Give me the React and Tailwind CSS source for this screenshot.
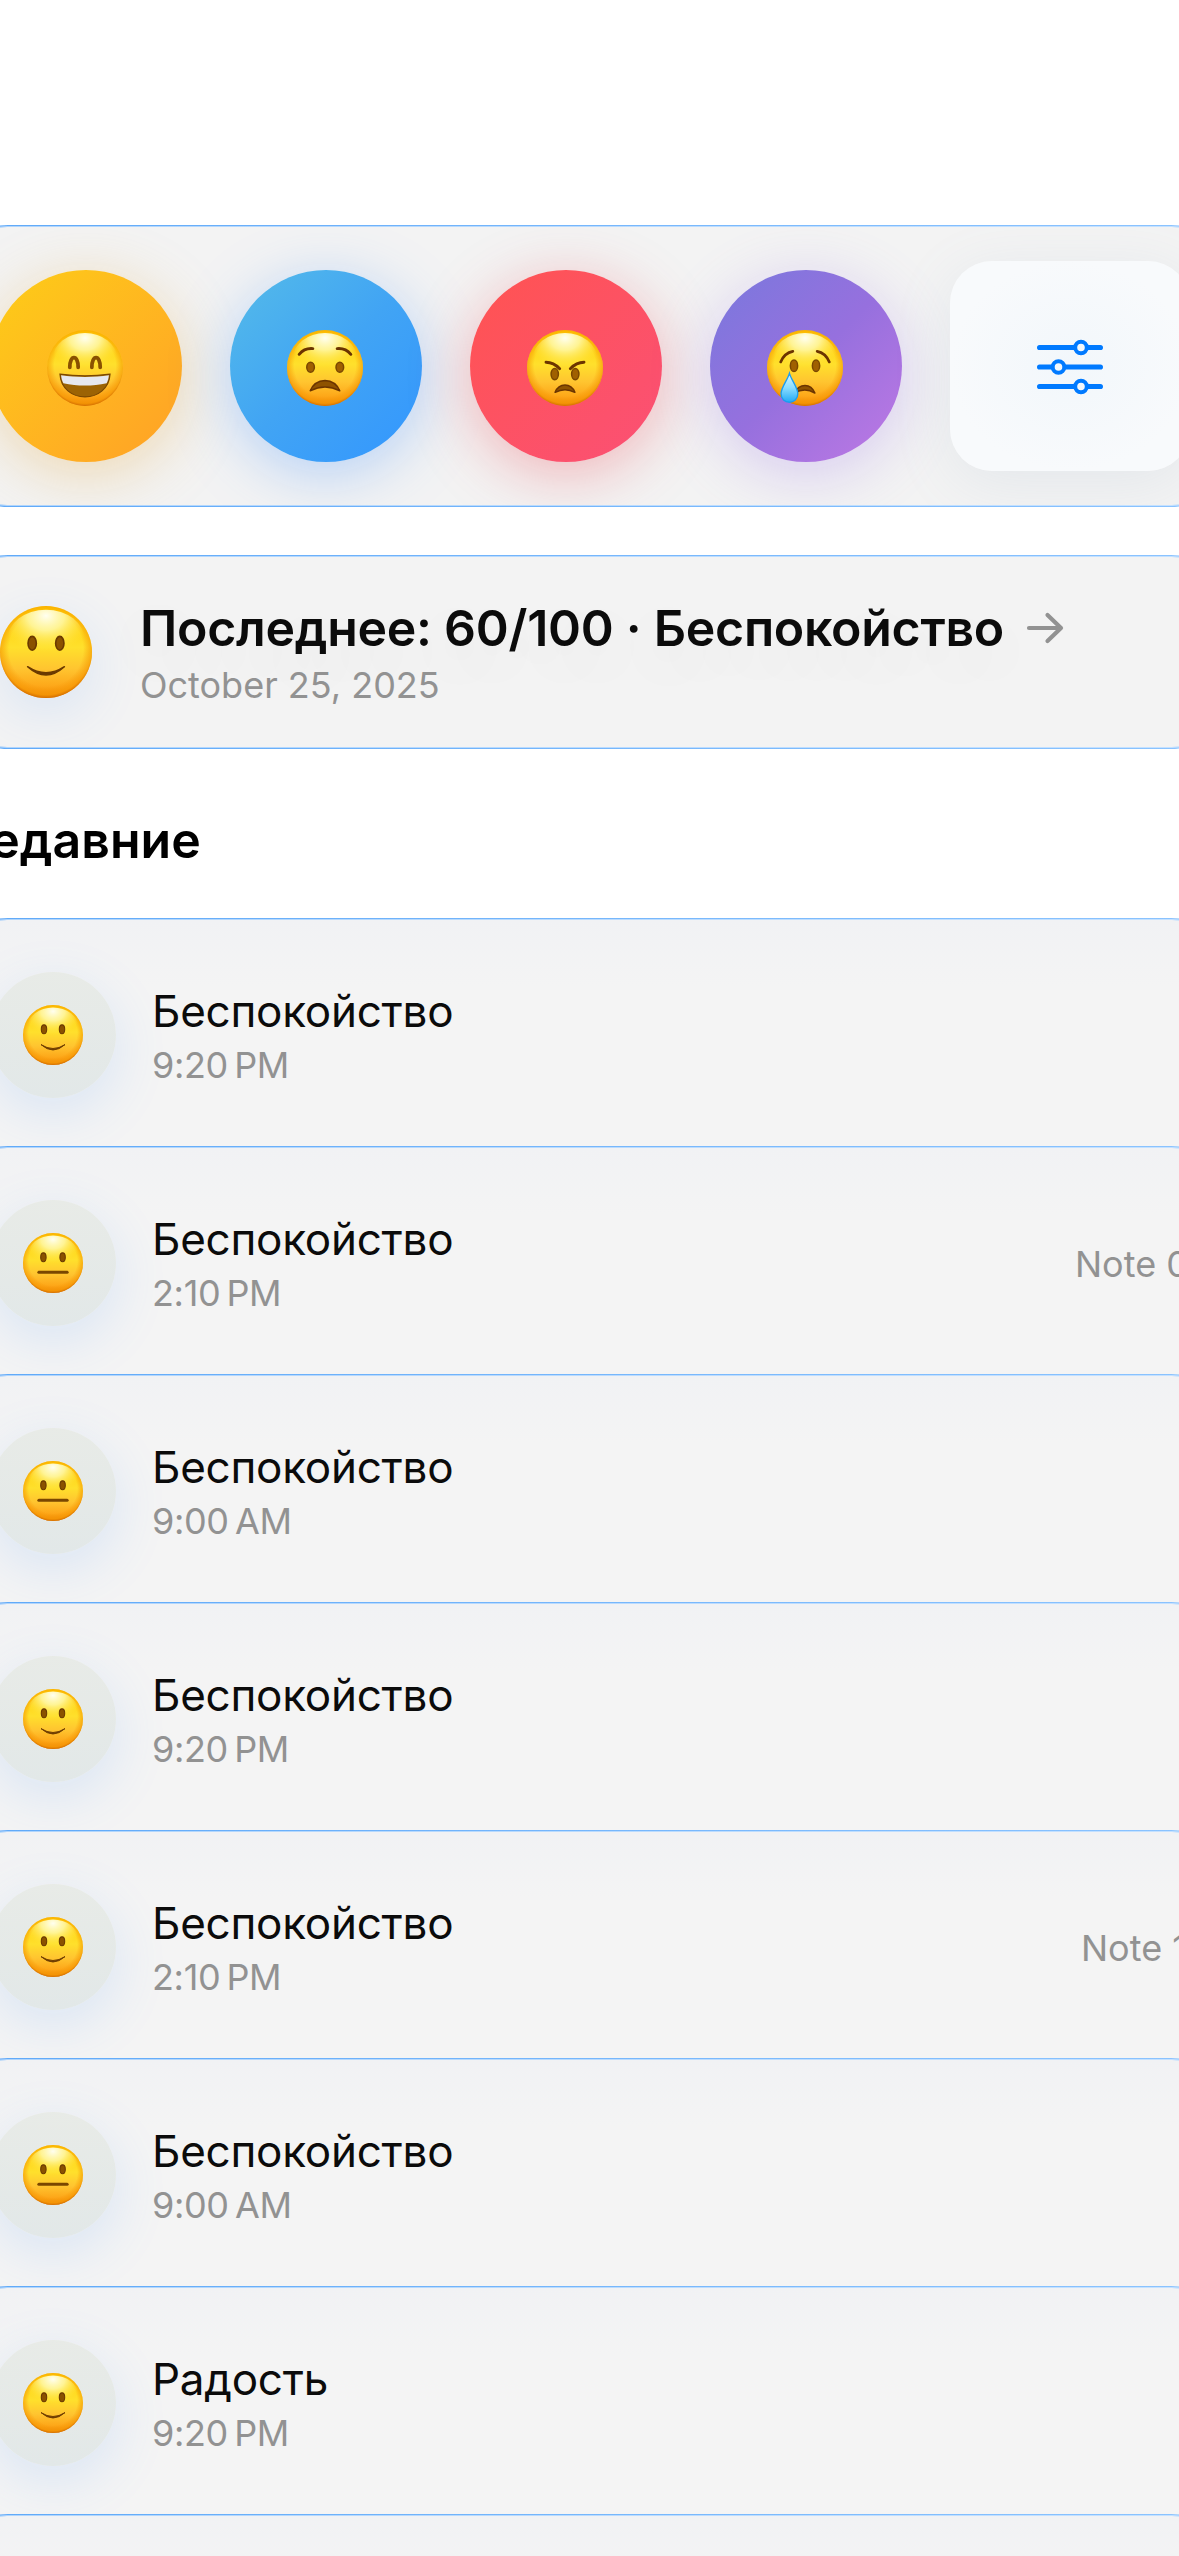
import React from "react";

const FONT = "font-['Inter','Liberation_Sans',sans-serif]";

const mouths = {
  smile: <path d="M30 66 Q50 84 70 66 Q50 79 30 66 Z" fill="#6b3a00" stroke="#6b3a00" strokeWidth="1.6" strokeLinejoin="round" />,
  neutral: <path d="M26.500 65.500 H73.500" stroke="#7a4700" strokeWidth="5.200" strokeLinecap="round" />,
};

function Face({ kind, className }) {
  const simple = kind === "smile" || kind === "neutral";
  const ex = kind === "smile" ? [35, 65] : [34, 66];
  return (
    <svg viewBox="0 0 100 100" className={className}>
      <defs>
        <linearGradient id={"base-" + kind} x1="0" y1="0" x2="0" y2="1">
          <stop offset="0" stopColor="#ffc800" />
          <stop offset="0.45" stopColor="#ffe02c" />
          <stop offset="0.68" stopColor="#ffc530" />
          <stop offset="0.88" stopColor="#fda618" />
          <stop offset="1" stopColor="#ee8a08" />
        </linearGradient>
        <radialGradient id={"rim-" + kind} cx="0.5" cy="0.47" r="0.53">
          <stop offset="0.76" stopColor="#f59000" stopOpacity="0" />
          <stop offset="0.93" stopColor="#f59500" stopOpacity="0.6" />
          <stop offset="1" stopColor="#d06a00" stopOpacity="0.95" />
        </radialGradient>
        <radialGradient id={"shine-" + kind} cx="0.5" cy="0.1" r="0.6">
          <stop offset="0" stopColor="#fffff0" />
          <stop offset="0.4" stopColor="#fffcb4" stopOpacity="0.8" />
          <stop offset="1" stopColor="#ffe93c" stopOpacity="0" />
        </radialGradient>
      </defs>
      <circle cx="50" cy="50" r="50" fill={"url(#base-" + kind + ")"} />
      <circle cx="50" cy="50" r="50" fill={"url(#rim-" + kind + ")"} />
      <ellipse cx="50" cy="37" rx="42" ry="33" fill={"url(#shine-" + kind + ")"} />
      {simple && (
        <g fill="#8a5200" stroke="#6b3a00" strokeWidth="1.8">
          <ellipse cx={ex[0]} cy="40.500" rx="4.500" ry="7.400" />
          <ellipse cx={ex[1]} cy="40.500" rx="4.500" ry="7.400" />
        </g>
      )}
      {simple && mouths[kind]}
      {kind === "grin" && (
        <g>
          <path d="M30 49 C30 32 41 32 41 49 M59 49 C59 32 70 32 70 49" fill="none" stroke="#8a5200" strokeWidth="5" strokeLinecap="round" />
          <path d="M17 58 C38 61 62 61 83 58 C82 77 67 88 50 88 C33 88 18 77 17 58 Z" fill="#9c6304" stroke="#7a4700" strokeWidth="1.500" />
          <path d="M18.500 59.500 C38 62.500 62 62.500 81.500 59.500 C81 64 80 67 78.500 70 C60 74 40 74 21.500 70 C20 67 19 64 18.500 59.500 Z" fill="#e6e8f0" />
        </g>
      )}
      {kind === "worried" && (
        <g>
          <g fill="#a06000" stroke="#7a4700" strokeWidth="2">
            <ellipse cx="31" cy="49" rx="5" ry="6.600" />
            <ellipse cx="69.500" cy="49" rx="5" ry="6.600" />
          </g>
          <path d="M16 32 Q23 23.500 34 24.500 M84 32 Q77 23.500 66 24.500" fill="none" stroke="#6b3400" strokeWidth="3.800" strokeLinecap="round" />
          <path d="M30.500 80 Q36 67 50 66.500 Q64 67 69.500 80 Q50 70 30.500 80 Z" fill="#8f5200" stroke="#6b3400" strokeWidth="1.800" strokeLinejoin="round" />
        </g>
      )}
      {kind === "angry" && (
        <g>
          <g fill="#a06000" stroke="#7a4700" strokeWidth="2">
            <ellipse cx="36.500" cy="58" rx="4.800" ry="7.400" />
            <ellipse cx="63.500" cy="58" rx="4.800" ry="7.400" />
          </g>
          <path d="M25 42.500 Q35 42.500 43 51 M75 42.500 Q65 42.500 57 51" fill="none" stroke="#6b3400" strokeWidth="3.800" strokeLinecap="round" />
          <path d="M37 82 Q41 72.500 50 72.500 Q59 72.500 63 82 Q50 75 37 82 Z" fill="#8f5200" stroke="#6b3400" strokeWidth="2" strokeLinejoin="round" />
        </g>
      )}
      {kind === "cry" && (
        <g>
          <g fill="#a06000" stroke="#7a4700" strokeWidth="2">
            <ellipse cx="35.500" cy="47" rx="4.800" ry="7.600" />
            <ellipse cx="64.500" cy="47" rx="4.800" ry="7.600" />
          </g>
          <path d="M18 42 Q23 30 34 28 M82 42 Q77 30 66 28" fill="none" stroke="#6b3400" strokeWidth="3.600" strokeLinecap="round" />
          <path d="M36 83 Q41 73 50 73 Q59 73 63 83 Q50 75 36 83 Z" fill="#8f5200" stroke="#6b3400" strokeWidth="2" strokeLinejoin="round" />
          <linearGradient id="tear" x1="0" y1="0" x2="0" y2="1">
            <stop offset="0" stopColor="#d8f6ff" />
            <stop offset="0.5" stopColor="#8adcff" />
            <stop offset="1" stopColor="#22aaf5" />
          </linearGradient>
          <path d="M29.500 57 C32 66 40.500 75 40.500 84 C40.500 91 35.500 95 29.500 95 C23.500 95 18.500 91 18.500 84 C18.500 75 27 66 29.500 57 Z" fill="url(#tear)" stroke="#1a9df0" strokeWidth="1.800" />
        </g>
      )}
    </svg>
  );
}

/* Panel with a soft blue hairline that fades towards the right edge */
function Panel({ className, children }) {
  return (
    <section className={"-mx-12 shrink-0 rounded-[56px] bg-gradient-to-r from-[#5fa9f8] to-[#8cc4ff] py-px " + className}>
      <div className="flex h-full items-center overflow-hidden rounded-[55px] border-y border-white/50 bg-[#f3f3f3] bg-clip-padding px-12">{children}</div>
    </section>
  );
}

/* List row: the hairline runs along the top only */
function Row({ className, children }) {
  return (
    <li className={"-mx-12 shrink-0 rounded-t-[56px] bg-gradient-to-r from-[#5fa9f8] to-[#8cc4ff] pt-px " + className}>
      <div className="flex h-full items-center rounded-t-[55px] border-t border-white/50 bg-[linear-gradient(#f1f2f4,#f4f4f4_30%,#f4f4f4)] bg-clip-padding px-12">{children}</div>
    </li>
  );
}

const moods = [
  { kind: "grin", look: "from-[#fdcd16] to-[#ffa026] shadow-[0_12px_60px_rgba(230,165,50,0.34)]" },
  { kind: "worried", look: "from-[#55bbe8] via-[#41a4f4] to-[#3396ff] shadow-[0_12px_60px_rgba(60,140,255,0.34)]" },
  { kind: "angry", look: "from-[#ff5350] to-[#fb5075] shadow-[0_12px_60px_rgba(235,70,80,0.36)]" },
  { kind: "cry", look: "from-[#7878dd] via-[#9670de] to-[#bf78e4] shadow-[0_12px_60px_rgba(150,110,235,0.3)]" },
];

const entries = [
  { kind: "smile", title: "Беспокойство", time: "9:20\u2009PM" },
  { kind: "neutral", title: "Беспокойство", time: "2:10\u2009PM", note: "Note 0", w: "w-[104px]" },
  { kind: "neutral", title: "Беспокойство", time: "9:00\u2009AM" },
  { kind: "smile", title: "Беспокойство", time: "9:20\u2009PM" },
  { kind: "smile", title: "Беспокойство", time: "2:10\u2009PM", note: "Note 1", w: "w-[98px]" },
  { kind: "neutral", title: "Беспокойство", time: "9:00\u2009AM" },
  { kind: "smile", title: "Радость", time: "9:20\u2009PM" },
];

function Entry({ kind, title, time, note, w }) {
  return (
    <Row className="h-[228px]">
      <div className="-ml-2.5 mt-1 flex size-[126px] shrink-0 items-center justify-center rounded-full bg-gradient-to-b from-[#e8ebe7] to-[#e2e8e8] shadow-[0_15px_54px_rgba(70,150,255,0.15)]">
        <Face kind={kind} className="size-[60px]" />
      </div>
      <div className="ml-[36px] flex flex-col pt-[7px]">
        <div className="text-[44px] leading-[54px] tracking-[-0.25px] text-[#0b0b0b] [text-shadow:0_18px_54px_rgba(0,0,0,0.05)]">{title}</div>
        <div className="pt-0.5 text-[36px] leading-[50px] tracking-[-0.35px] text-[#929292]">{time}</div>
      </div>
      {note && <div className={"ml-auto shrink-0 whitespace-nowrap pt-[5px] text-[36px] leading-[44px] text-[#929292] " + w}>{note}</div>}
    </Row>
  );
}

export default function App() {
  return (
    <main className={"flex h-[2556px] w-[1179px] flex-col overflow-hidden bg-white pt-[225px] " + FONT}>
      <Panel className="h-[282px]">
        <div className="-ml-2.5 flex items-center gap-12">
          {moods.map((m) => (
            <button key={m.kind} className={"flex size-[192px] shrink-0 items-center justify-center rounded-full bg-gradient-to-br pr-[3px] pt-[3px] " + m.look}>
              <Face kind={m.kind} className="size-[76px]" />
            </button>
          ))}
          <button className="flex h-[210px] w-[240px] shrink-0 items-center justify-center rounded-[42px] bg-[radial-gradient(closest-side,#f2f7fb,#f8fafc)] shadow-[0_12px_60px_rgba(120,160,190,0.12)]">
            <svg viewBox="0 0 66 56" className="mt-0.5 h-14 w-[66px]" fill="none" stroke="#007aff" strokeWidth="5.200" strokeLinecap="round">
              <path d="M2.600 8.500H37M51 8.500H63.400M2.600 28H14.500M28.500 28H63.400M2.600 47.500H37M51 47.500H63.400" />
              <g strokeWidth="4">
                <circle cx="44" cy="8.500" r="5.800" />
                <circle cx="21.500" cy="28" r="5.800" />
                <circle cx="44" cy="47.500" r="5.800" />
              </g>
            </svg>
          </button>
        </div>
      </Panel>

      <Panel className="mt-12 h-[194px]">
        <div className="size-[92px] shrink-0 rounded-full shadow-[0_15px_54px_rgba(70,150,255,0.14)]">
          <Face kind="smile" className="size-[92px]" />
        </div>
        <div className="ml-[48px] flex flex-col pt-1.5">
          <div className="flex items-center gap-6">
            <div className="whitespace-nowrap text-[50px] font-semibold leading-[60px] tracking-[-0.28px] text-[#0b0b0b] [text-shadow:0_18px_54px_rgba(0,0,0,0.08)]">Последнее: 60/100 · Беспокойство</div>
            <svg viewBox="0 0 38 32" className="-ml-0.5 h-8 w-[38px]" fill="none" stroke="#929292" strokeWidth="4.200" strokeLinecap="round" strokeLinejoin="round">
              <path d="M3 16H35M21.500 3L35 16L21.500 29" />
            </svg>
          </div>
          <div className="text-[36px] leading-[54px] text-[#929292]">October 25, 2025</div>
        </div>
      </Panel>

      <h2 className="-ml-[47px] mt-[61px] h-[108px] shrink-0 text-[50px] font-semibold leading-[60px] text-black">Недавние</h2>

      <ul className="flex shrink-0 flex-col bg-[#f3f3f3]">
        {entries.map((e, i) => (
          <Entry key={i} {...e} />
        ))}
        <Row className="h-[228px]" />
      </ul>
    </main>
  );
}
